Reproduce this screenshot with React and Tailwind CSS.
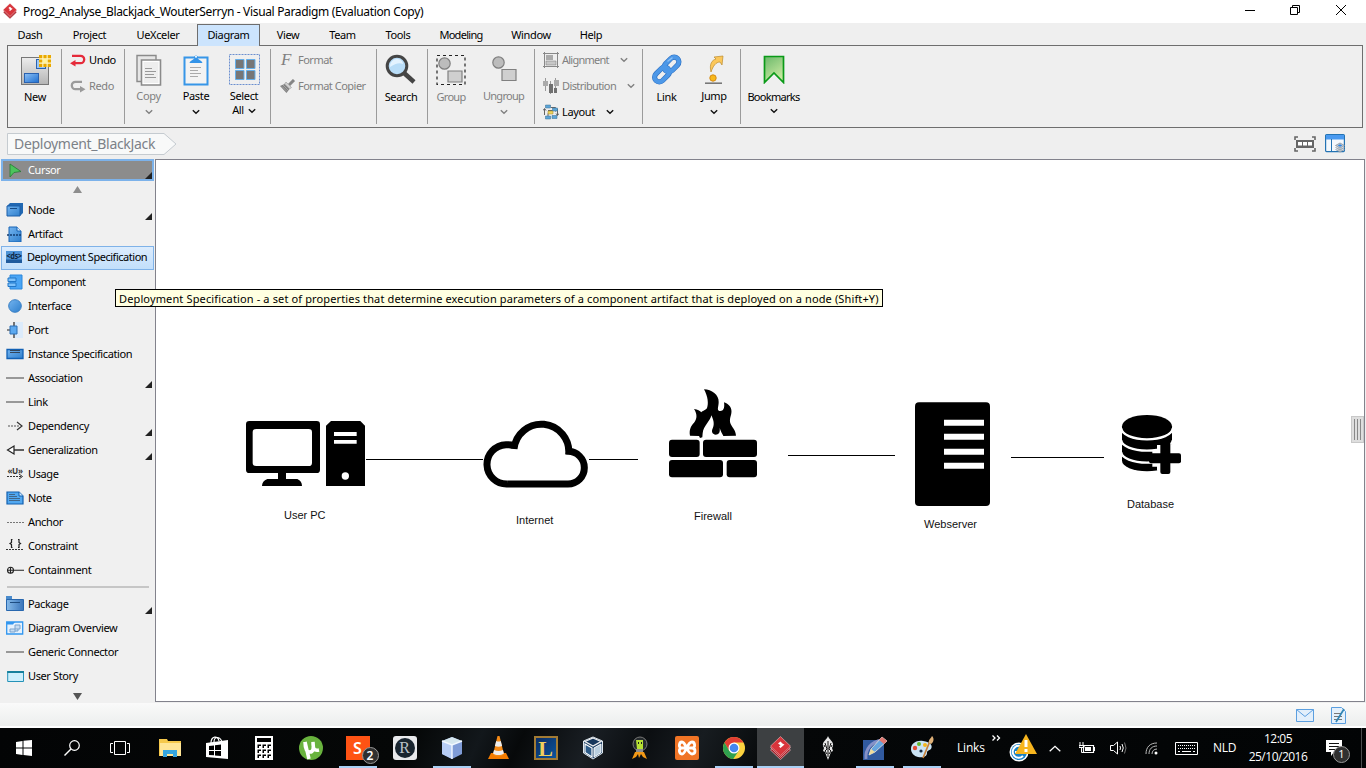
import React from "react";

const Svg = ({ w = 24, h = w, vb, className = "", children }) => (
  <svg width={w} height={h} viewBox={vb || `0 0 ${w} ${h}`} fill="none" className={`block shrink-0 ${className}`}>
    {children}
  </svg>
);

const Logo = ({ size = 14 }) => (
  <Svg w={size} h={size * 1.15} vb="0 0 42 48">
    <path d="M21 9 41 28 21 47 1 28Z" fill="#a31c25" stroke="#f0d4d5" strokeWidth="1.2" />
    <path d="M21 4 41 23 21 43 1 23Z" fill="#c32630" stroke="#f0d4d5" strokeWidth="1.2" />
    <path d="M21 1 41 20 21 39 1 20Z" fill="#d8353c" stroke="#f0d4d5" strokeWidth="1" />
    <path d="m21 11 4.500 4.500 3.500 1.500-8 7-3-3 3-2.500-5-3.500Z" fill="#fff" />
  </Svg>
);

const Chevron = ({ dim }) => (
  <Svg w={8} h={6}>
    <path d="m.8 1.300 3.200 3 3.200-3" stroke={dim ? "#808080" : "#111"} strokeWidth="1.4" />
  </Svg>
);

/* ---------- ribbon icons ---------- */

const NewIcon = () => (
  <Svg w={32} h={32}>
    <defs>
      <linearGradient id="nw" x1="0" y1="0" x2="0" y2="1"><stop stopColor="#ededed" /><stop offset="1" stopColor="#b4b4b4" /></linearGradient>
      <linearGradient id="nb" x1="0" y1="0" x2="1" y2="1"><stop stopColor="#8cc0f5" /><stop offset="1" stopColor="#1e6fd0" /></linearGradient>
    </defs>
    <rect x="2.5" y="3.5" width="27" height="27" fill="url(#nw)" stroke="#777" />
    <rect x="5.500" y="19.500" width="14" height="9" fill="url(#nb)" stroke="#2a62b0" />
    <rect x="17.500" y="5.500" width="9" height="9" fill="#9cc6f3" stroke="#2a62b0" />
    <rect x="20" y="1" width="12" height="12" fill="#fdf6c8" />
    <path d="M20 1h3.300v3.300H20zM24.400 1h3.200v3.300h-3.200zM28.700 1H32v3.300h-3.300zM20 5.400h3.300v3.200H20zM28.700 5.400H32v3.200h-3.300zM20 9.700h3.300V13H20zM24.400 9.700h3.200V13h-3.200zM28.700 9.700H32V13h-3.300z" fill="#eaa900" />
    <path d="M24 5h4v4h-4z" fill="#fff3a0" />
  </Svg>
);
const UndoIcon = () => (
  <Svg w={16} h={13}>
    <path d="M2 1.800h8.500a3.700 3.700 0 0 1 0 7.400H4" stroke="#e52a3a" strokeWidth="2.300" />
    <path d="M0 9.200 5.500 6v6.400Z" fill="#e52a3a" />
  </Svg>
);
const RedoIcon = () => (
  <Svg w={16} h={13}>
    <path d="M12 1.800H5.500a3.700 3.700 0 0 0 0 7.400H11" stroke="#9a9a9a" strokeWidth="2.300" />
    <path d="M15.500 9.200 10 6v6.400Z" fill="#9a9a9a" />
  </Svg>
);
const CopyIcon = () => (
  <Svg w={28} h={32}>
    <path d="M2 1.500h19v26H2z" fill="#e6e6e6" stroke="#8a8a8a" strokeWidth="1.400" />
    <path d="M6.500 6h19v25h-19z" fill="#fff" stroke="#8a8a8a" strokeWidth="1.600" />
    <path d="M8.500 8h15v21h-15z" fill="#eee" />
    <path d="M10 14.500h7M10 17.500h11M10 20.500h9M10 23.500h11" stroke="#999" />
  </Svg>
);
const PasteIcon = () => (
  <Svg w={26} h={32}>
    <path d="M1.500 3.500h23v27h-23z" fill="#f3f3f3" stroke="#3796e8" strokeWidth="2" />
    <path d="M6.500 9c1-3 4-3 5-5a1.700 1.700 0 1 1 3 0c1 2 4 2 5 5Z" fill="#3393e8" />
    <circle cx="13" cy="2.800" r="1" fill="#fff" />
    <path d="M7 13.500h11M7 16.500h8M7 19.500h11M7 22.500h8" stroke="#aaa" />
  </Svg>
);
const SelectIcon = () => (
  <Svg w={31} h={31}>
    <path d="M.5.5h30v30H.5z" stroke="#6b8fcf" strokeDasharray="2 1" />
    <path d="M6.500 5.500h8.500v9H6.500zM17.500 5.500H26v9h-8.500zM6.500 16.500h8.500v9H6.500zM17.500 16.500H26v9h-8.500z" fill="#767676" stroke="#65aee8" strokeWidth="1" />
  </Svg>
);
const BrushIcon = () => (
  <Svg w={17} h={15}>
    <path d="m15 1-5 5" stroke="#858585" strokeWidth="3" />
    <path d="m7 3 5.500 5.500-2 1.500L5.500 5Z" fill="#d0d0d0" stroke="#999" strokeWidth=".6" />
    <path d="m5.500 5 5 5-3 4L1 7Z" fill="#808080" />
    <path d="m3 7.500 5 5M4 6l5 5" stroke="#b5b5b5" strokeWidth=".7" />
  </Svg>
);
const SearchIcon = () => (
  <Svg w={32} h={32}>
    <path d="m18.500 18.500 10.500 9.500" stroke="#454545" strokeWidth="4.500" />
    <circle cx="12" cy="12" r="9.800" fill="#b9ddf8" stroke="#454545" strokeWidth="3" />
    <path d="M5 13a7 7 0 0 1 7-8c4 0 6 3 6 5-4-2-8 0-13 3Z" fill="#e4f3ff" />
  </Svg>
);
const GroupIcon = ({ framed }) => (
  <Svg w={32} h={32}>
    {framed && <path d="M2 1.500h28v29H2z" stroke="#222" strokeWidth="1.200" strokeDasharray="3 3" />}
    <circle cx={framed ? 9.500 : 10.500} cy={framed ? 9.500 : 8.500} r="5.700" fill="#bcbcbc" stroke="#808080" strokeWidth="1.200" />
    <path d={framed ? "M13 17h14v11H13z" : "M14 15.500h14v11H14z"} fill="#cfcfcf" stroke="#808080" strokeWidth="1.200" />
  </Svg>
);
const AlignIcon = () => (
  <Svg w={16} h={16}>
    <path d="M1.500 0v16M14.500 0v16M0 1.500h16M0 14.500h16" stroke="#888" />
    <path d="M3 3h7v5H3z" fill="#aaa" /><path d="M3 9h10v4H3z" fill="#c7c7c7" stroke="#888" strokeWidth=".6" />
  </Svg>
);
const DistIcon = () => (
  <Svg w={16} h={16}>
    <path d="M2.500 0v13M7.500 3v13M12.500 0v15" stroke="#999" />
    <path d="M0 3h5v5H0zM11 2h5v6h-5z" fill="#aaa" /><path d="M6 6h4v9H6zM11 10h3v5h-3z" fill="#707070" />
  </Svg>
);
const LayoutIcon = () => (
  <Svg w={16} h={16}>
    <path d="M1.500 11V5M0 6.500 1.500 4.500 3 6.500M8 3.500h4.500v4M5 6.500H9.500M5 9.500v3M14.500 5v6M13 9.500l1.500 2 1.500-2" stroke="#555" strokeWidth=".9" />
    <path d="M2.500 1h5v3h-5zM9.500 4h5v3h-5zM2.500 12h5v3h-5zM9 11.500h5v3H9z" fill="#5da5d8" stroke="#356c91" strokeWidth=".5" />
    <path d="M5 7h5v3H5z" fill="#f0d560" stroke="#9a8325" strokeWidth=".5" />
  </Svg>
);
const LinkIcon = () => (
  <Svg w={32} h={32}>
    {[["#2d6fc0", 5.2], ["#4d98e8", 4]].map(([c, s]) => (
      <g key={c} stroke={c} strokeWidth={s}>
        <rect x="-8.500" y="-4.700" width="17" height="9.400" rx="4.700" transform="translate(20.500 10.500) rotate(-45)" />
        <rect x="-8.500" y="-4.700" width="17" height="9.400" rx="4.700" transform="translate(11 20.500) rotate(-45)" />
      </g>
    ))}
    <path d="m17 7 4-3" stroke="#8cc0f5" strokeWidth="1.500" strokeLinecap="round" />
  </Svg>
);
const JumpIcon = () => (
  <Svg w={20} h={30}>
    <path d="M7 17C5 9 8 5 12 4L10 2l9-1-1 9-2-3c-4 0-7 4-9 10Z" fill="#fbc75a" stroke="#bc8b2c" strokeWidth=".7" />
    <circle cx="9" cy="23" r="3.200" fill="#f8b819" stroke="#d58b16" />
    <path d="M1 28.200h17" stroke="#707070" strokeWidth="1.500" />
  </Svg>
);
const BookmarkIcon = () => (
  <Svg w={22} h={29}>
    <defs><linearGradient id="bk" x1="0" y1="0" x2=".5" y2="1"><stop stopColor="#6bb86b" /><stop offset="1" stopColor="#c8e9a0" /></linearGradient></defs>
    <path d="M1.500 1.500h19v26l-9.500-9.500-9.500 9.500Z" fill="url(#bk)" stroke="#0a9a18" strokeWidth="1.700" />
  </Svg>
);

/* ---------- ribbon ---------- */

const Group = ({ className, children }) => (
  <div className={`my-[3px] flex shrink-0 border-r border-[#9b9b9b] ${className}`}>{children}</div>
);

const Big = ({ icon, label, width, dim, arrow, up, inlineArrow, tight }) => (
  <div className={`flex shrink-0 flex-col items-center ${width} ${dim ? "text-[#808080]" : "text-black"}`}>
    <div className="flex h-[41px] items-center justify-center">{icon}</div>
    <div className={`text-[11px] leading-[14px] whitespace-nowrap ${tight ? "tracking-[-0.7px]" : "tracking-[-0.35px]"} ${up ? "-mt-px" : ""}`}>{label}</div>
    {arrow && <div className={up ? "mt-[6px]" : "mt-[4px]"}><Chevron dim={dim} /></div>}
    {inlineArrow && (
      <div className="flex items-center gap-1 text-[11px] leading-[14px] tracking-[-0.35px]">{inlineArrow}<span className="pt-[2px]"><Chevron /></span></div>
    )}
  </div>
);

const Small = ({ icon, label, dim, arrow, gap = "gap-1", tracking = "tracking-[-0.35px]" }) => (
  <div className={`flex h-[26px] items-center text-[11px] whitespace-nowrap ${gap} ${dim ? "text-[#808080]" : "text-black"}`}>
    {icon}
    <span className={tracking}>{label}</span>
    {arrow && <span className="ml-[8px]"><Chevron dim={dim} /></span>}
  </div>
);

const menus = [
  ["Dash", "w-[60px]"], ["Project", "w-[59px]"], ["UeXceler", "w-[78px]"], ["Diagram", "w-[63px]"], ["View", "w-14"],
  ["Team", "w-[53px]"], ["Tools", "w-[58px]"], ["Modeling", "w-[68px]"], ["Window", "w-[72px]"], ["Help", "w-12"],
];

const Header = () => (
  <header className="shrink-0">
    <div className="flex h-[23px] items-center bg-white pl-[3px]">
      <Logo size={14} />
      <span className="ml-[6px] text-[12px] tracking-[-0.34px] whitespace-nowrap">Prog2_Analyse_Blackjack_WouterSerryn - Visual Paradigm (Evaluation Copy)</span>
      <div className="mr-[19px] -mt-[4px] ml-auto flex items-center gap-[35px]">
        <Svg w={11} h={10}><path d="M1 5.500h10" stroke="#000" /></Svg>
        <Svg w={11} h={10}><path d="M.5 2.500h7v7h-7zM2.500 2V.5h7v7H8" stroke="#000" /></Svg>
        <Svg w={11} h={10}><path d="m0 0 10 10M10 0 0 10" stroke="#000" /></Svg>
      </div>
    </div>
    <nav className="flex h-[23px] items-end bg-[#efefef] text-[11px]">
      {menus.map(([m, w]) => (
        <div key={m} className={`flex h-[22px] items-center justify-center ${m === "Modeling" ? "tracking-[-0.7px]" : "tracking-[-0.35px]"} ${w} ${m === "Diagram" ? "z-10 border border-b-0 border-[#6e6e6e] bg-[#cce4fd]" : ""}`}>{m}</div>
      ))}
    </nav>
    <div className="-mt-px mr-[3px] ml-[7px] flex h-[83px] border border-[#6e6e6e] bg-[#efefef]">
      <Group className="w-[54px]"><Big icon={<NewIcon />} label="New" width="w-[54px]" /></Group>
      <Group className="w-[63px] flex-col pl-2">
        <div className="-mt-[2px]">
          <Small icon={<UndoIcon />} label="Undo" gap="gap-[3px]" />
          <Small icon={<RedoIcon />} label="Redo" dim gap="gap-[3px]" />
        </div>
      </Group>
      <Group className="w-[146px]">
        <Big icon={<CopyIcon />} label="Copy" width="w-[47px]" dim arrow up />
        <Big icon={<PasteIcon />} label="Paste" width="w-[48px]" arrow up />
        <Big icon={<SelectIcon />} label="Select" width="w-[48px]" up inlineArrow="All" />
      </Group>
      <Group className="w-[106px] flex-col pl-[8px]">
        <div className="-mt-[2px]">
          <Small icon={<span className="w-[17px] pl-[2px] font-['Liberation_Serif',serif] text-[17px] italic">F</span>} label="Format" dim gap="gap-[2px]" tracking="tracking-[-0.5px]" />
          <Small icon={<BrushIcon />} label="Format Copier" dim gap="gap-[2px]" tracking="tracking-[-0.5px]" />
        </div>
      </Group>
      <Group className="w-[51px]"><Big icon={<SearchIcon />} label="Search" width="w-[48px]" /></Group>
      <Group className="w-[107px]">
        <Big icon={<GroupIcon framed />} label="Group" width="w-[46px]" dim tight />
        <Big icon={<GroupIcon />} label="Ungroup" width="w-[59px]" dim arrow up tight />
      </Group>
      <Group className="w-[108px] flex-col pl-2">
        <div className="-mt-[2px]">
          <Small icon={<AlignIcon />} label="Alignment" dim arrow gap="gap-[3px]" tracking="tracking-[-0.75px]" />
          <Small icon={<DistIcon />} label="Distribution" dim arrow gap="gap-[3px]" tracking="tracking-[-0.6px]" />
          <Small icon={<LayoutIcon />} label="Layout" arrow gap="gap-[3px]" />
        </div>
      </Group>
      <Group className="w-[98px]">
        <Big icon={<LinkIcon />} label="Link" width="w-[47px]" />
        <Big icon={<JumpIcon />} label="Jump" width="w-[48px]" arrow up />
      </Group>
      <div className="my-[3px]"><Big icon={<BookmarkIcon />} label="Bookmarks" width="w-[65px]" arrow tight /></div>
    </div>
    <div className="flex h-[31px] items-center bg-[#efefef] pr-[21px] pl-[7px]">
      <div className="relative flex h-[22px] w-[170px] items-center pl-[7px]">
        <Svg w={170} h={22} className="absolute top-0 left-0"><path d="M.5.5H157l12 10.500-12 10.500H.5Z" fill="#f8f9f9" stroke="#c5cbd0" /></Svg>
        <span className="relative text-[14px] tracking-[-0.3px] text-[#7c8188]">Deployment_BlackJack</span>
      </div>
      <div className="ml-auto flex items-center gap-[9px]">
        <Svg w={22} h={16}>
          <path d="M1 4V1h3M18 1h3v3M21 12v3h-3M4 15H1v-3" stroke="#666" strokeWidth="1.600" />
          <path d="M2 4h18v8H2z" fill="#666" /><path d="M4 6h4v3.500H4zM9 6h4v3.500H9zM14 6h4v3.500h-4z" fill="#fff" />
        </Svg>
        <Svg w={20} h={19}>
          <rect x=".6" y=".6" width="18.800" height="17" rx="1" fill="#f4f8fc" stroke="#2373b3" strokeWidth="1.200" />
          <path d="M1 1h18v4.500H1z" fill="#4a9af0" /><path d="M6.500 5v12" stroke="#2373b3" />
          <path d="m15 9 4.500 2.500-4.500 2.500-4.500-2.500Zm-4.500 4.500L15 16l4.500-2.500m-9 2L15 18l4.500-2.500" fill="#c2ccd6" stroke="#8a949e" strokeWidth=".8" />
          <path d="m15 10.200 2.300 1.300-2.300 1.300-2.300-1.300Z" fill="#2d86e6" />
        </Svg>
      </div>
    </div>
  </header>
);

/* ---------- palette ---------- */

const line = <path d="M0 8h18" stroke="#888" strokeWidth="1.700" />;
const icons = {
  cursor: <path d="M4 2v13l4-4.500 7-1Z" fill="#4cc45c" stroke="#267a34" strokeWidth=".8" />,
  node: <><path d="m1 4 3-3h13v10l-3 3H1Z" fill="#2268b2" /><path d="M1 4h13v10H1z" fill="url(#pal)" stroke="#1d5fa8" /><path d="M4 6.500h7" stroke="#174b86" /></>,
  artifact: <><path d="M3 1h8l4 4v11H3z" fill="url(#pal)" stroke="#1965b5" /><path d="M11 1v4h4" fill="#d8ecff" stroke="#1965b5" /><path d="M1 9h15" stroke="#123c70" strokeWidth="1.500" strokeDasharray="2 1" /></>,
  ds: <><path d="M1 2h16v12H1z" fill="#4c93d8" /><path d="M1 10.500h16V14H1z" fill="#205b9d" /><text x="9" y="9.500" textAnchor="middle" fontFamily="Noto Sans, sans-serif" fontSize="8" fontWeight="700" fill="#0d2744" textLength="15" lengthAdjust="spacingAndGlyphs">{"<ds>"}</text></>,
  component: <><path d="M4 1h12v14H4z" fill="#4aa5f5" stroke="#2b87dc" /><path d="M2 4h8v3.500H2zM2 9h8v3.500H2z" fill="#7cc1fb" stroke="#2176c7" /></>,
  iface: <circle cx="9" cy="8" r="6.300" fill="url(#pal)" stroke="#3b80c4" />,
  port: <><path d="M9 0h8v16H9z" fill="#dcebfb" /><path d="M8 0v16M1 8h3" stroke="#222" strokeWidth="1.200" /><path d="M4 4h7v8H4z" fill="#5ca9f0" stroke="#2c6fb4" /></>,
  instance: <><path d="M1 3.500h16v9H1z" fill="url(#pal)" stroke="#1160b4" strokeWidth="1.300" /><path d="M4 4.500h10M4 6.500h10" stroke="#34475c" /></>,
  line,
  dep: <><path d="M2 8h12" stroke="#555" strokeDasharray="2 1" /><path d="m11 4 5 4-5 4" stroke="#333" strokeWidth="1.200" /></>,
  gen: <><path d="M8 8h10" stroke="#111" strokeWidth="1.300" /><path d="M1.500 8 8 4v8Z" fill="#fff" stroke="#222" strokeWidth="1.200" /></>,
  usage: <><text x="9" y="7.500" textAnchor="middle" fontFamily="Noto Sans, sans-serif" fontSize="8" fontWeight="700" fill="#333" textLength="15" lengthAdjust="spacingAndGlyphs">«U»</text><path d="M1 10.500h15" stroke="#333" strokeDasharray="2 1" /><path d="m13 8 3.500 2.500L13 13" stroke="#333" /></>,
  note: <><path d="M1 2h12l4 4v8H1z" fill="#52a8f0" stroke="#115fae" strokeWidth="1.200" /><path d="M13 2v4h4" fill="#d4eaff" stroke="#115fae" /><path d="M3 4.500h6M3 6.500h8M3 8.500h11M3 10.500h11" stroke="#3e5770" strokeWidth=".8" /></>,
  anchor: <path d="M1 8.500h17" stroke="#777" strokeDasharray="2 1" />,
  constraint: <><path d="M0 11.500h18" stroke="#333" strokeDasharray="2 1" /><path d="M6.500 1.500H5.500v3L4 5.500l1.500 1v3h1M12 1.500h1v3l1.500 1-1.500 1v3h-1" stroke="#222" strokeWidth="1.200" /></>,
  contain: <><circle cx="4.500" cy="8.300" r="3" stroke="#222" strokeWidth="1.100" /><path d="M1.500 8.300H18M4.500 5.300v6" stroke="#222" strokeWidth="1.100" /></>,
  pkg: <><path d="M0 0h6v4H0z" fill="#4a8bcc" /><path d="M.5 3.500h17v11H.5z" fill="url(#pal2)" stroke="#2867ae" /><path d="M4 6.500h10" stroke="#1f4d82" /></>,
  overview: <><path d="M.7 2h16v12H.7z" fill="#e5f1fd" stroke="#3196ef" strokeWidth="1.300" /><path d="M1 2h8L7 4.500H1z" fill="#3196ef" /><path d="M9 5h5v4H9zM4 9h5v3H4zM9 11h3V9" fill="#c6dcf2" stroke="#7aa3cc" /></>,
  story: <><path d="M1.700 3.500h15.800v10H1.700z" fill="#cceffc" stroke="#2492b8" /><path d="M1.200 3h16.800v2H1.200z" fill="#15809c" /></>,
};
const tools = [
  ["node", "Node", 1], ["artifact", "Artifact"], ["ds", "Deployment Specification"], ["component", "Component"], ["iface", "Interface"],
  ["port", "Port"], ["instance", "Instance Specification"], ["line", "Association", 1], ["line", "Link"], ["dep", "Dependency", 1],
  ["gen", "Generalization", 1], ["usage", "Usage"], ["note", "Note"], ["anchor", "Anchor"], ["constraint", "Constraint"], ["contain", "Containment"],
];
const extra = [["pkg", "Package", 1], ["overview", "Diagram Overview"], ["line", "Generic Connector"], ["story", "User Story"]];

const Corner = ({ className }) => <Svg w={7} h={7} className={className}><path d="M7 0v7H0Z" fill="#222" /></Svg>;

const Tool = ({ icon, label, corner }) => {
  const hot = icon === "ds";
  return (
    <div className={`flex h-6 items-center text-[11px] whitespace-nowrap ${hot ? "mr-px ml-px border border-[#7fb2e8] bg-linear-to-b from-[#dcecfd] to-[#c2dffb] pb-[2px] pl-[3px] tracking-[-0.47px]" : "pl-[6px] tracking-[-0.38px]"}`}>
      <Svg w={18} h={16}>{icons[icon]}</Svg>
      <span className="ml-[4px]">{label}</span>
      {corner && <Corner className="mr-[3px] mb-[2px] ml-auto self-end" />}
    </div>
  );
};

const Palette = () => (
  <aside className="flex w-[155px] shrink-0 flex-col bg-[#f0f0f0]">
    <svg width="0" height="0" className="absolute">
      <defs>
        <linearGradient id="pal" x1="0" y1="0" x2="1" y2="1"><stop stopColor="#73b4f0" /><stop offset="1" stopColor="#2f7fcc" /></linearGradient>
        <linearGradient id="pal2"><stop stopColor="#87bbea" /><stop offset="1" stopColor="#3a74ba" /></linearGradient>
      </defs>
    </svg>
    <div className="mr-px ml-px flex h-[22px] items-center border-2 border-[#7cb2ea] bg-[#8c8c8c] pl-[3px] text-[11px] tracking-[-0.38px] text-white">
      <Svg w={18} h={16}>{icons.cursor}</Svg>
      <span className="ml-[4px]">Cursor</span>
      <Corner className="ml-auto self-end" />
    </div>
    <div className="flex h-[17px] items-center justify-center"><Svg w={9} h={7}><path d="M4.500 0 9 7H0Z" fill="#8d8d8d" /></Svg></div>
    {tools.map(([i, l, c]) => <Tool key={l} icon={i} label={l} corner={c} />)}
    <div className="h-[10px] pt-1 pr-[6px] pl-[7px]"><div className="h-[2px] bg-[#c6c6c6]" /></div>
    {extra.map(([i, l, c]) => <Tool key={l} icon={i} label={l} corner={c} />)}
    <div className="flex h-[15px] items-center justify-center pt-px"><Svg w={9} h={7}><path d="M4.500 7 9 0H0Z" fill="#555" /></Svg></div>
  </aside>
);

/* ---------- canvas ---------- */

const Wire = ({ className }) => <div className={`absolute h-px bg-black ${className}`} />;
const Label = ({ className, children }) => (
  <div className={`absolute font-['Liberation_Sans',sans-serif] text-[11px] leading-[13px] whitespace-nowrap text-[#111] ${className}`}>{children}</div>
);

const Canvas = () => (
  <main className="relative mr-px h-[543px] flex-1 border border-[#82828c] bg-white">
    <Wire className="top-[299px] left-[210px] w-[117px]" />
    <Wire className="top-[299px] left-[433px] w-[49px]" />
    <Wire className="top-[295px] left-[632px] w-[107px]" />
    <Wire className="top-[297px] left-[855px] w-[93px]" />

    <Svg w={122} h={68} vb="45 120 366 204" className="absolute top-[260px] left-[89px]">
      <path fill="#000" fillRule="evenodd" d="M58 123H260Q270 123 270 133V269Q270 279 260 279H168V297H202Q216 303 216 318H96Q96 303 112 297H144V279H58Q48 279 48 269V133Q48 123 58 123ZM78 147Q68 147 68 157V249Q68 258 78 258H236Q246 258 246 248V157Q246 147 236 147Z" />
      <path fill="#000" d="M303 123H391L405 137V318H288V137Z" />
      <path fill="#fff" d="M312 156h68v12h-68zM312 180h68v11h-68z" /><circle cx="346" cy="288" r="11" fill="#fff" />
    </Svg>
    <Svg w={110} h={72} vb="750 114 330 216" className="absolute top-[258px] left-[324px]">
      <path d="M832 312H1014A49 49 0 0 0 1014 214H1006M1016 223A82 82 0 1 0 852 207M855 196Q845 194 828 194A59 59 0 0 0 832 312" stroke="#000" strokeWidth="21" />
    </Svg>
    <Svg w={90} h={90} vb="84 24 270 270" className="absolute top-[228px] left-[512px]">
      <g fill="#000">
        <path d="M192 28C215 28 237 45 236 66C236 80 230 90 238 93C249 95 255 86 252 67C268 72 277 85 274 100C272 112 267 120 272 132C280 147 287 152 288 167L250 168C247 162 242 154 239 144C241 158 236 164 227 164C218 164 214 156 217 148C223 136 223 124 214 106C212 122 190 138 188 160L187 172L180 174L177 168L150 167C147 150 152 138 162 128C172 116 172 102 162 87C173 88 180 92 184 97C187 92 196 92 201 84C206 72 204 50 192 28Z" />
        <rect x="87" y="179" width="92" height="52" rx="9" /><rect x="189" y="179" width="162" height="52" rx="9" />
        <rect x="87" y="240" width="162" height="52" rx="9" /><rect x="260" y="240" width="91" height="52" rx="9" />
      </g>
    </Svg>
    <Svg w={75} h={104} vb="825 67 225 312" className="absolute top-[242px] left-[759px]">
      <rect x="825" y="68" width="225" height="311" rx="12" fill="#000" />
      <path fill="#fff" d="M912 120h120v18H912zM912 162h120v18H912zM912 207h120v18H912zM912 249h120v18H912z" />
    </Svg>
    <Svg w={62} h={63} vb="360 69 186 189" className="absolute top-[253px] left-[964px]">
      <path d="M366 109A75 34 0 0 1 516 109V212A75 32 0 0 1 366 212Z" fill="#000" />
      <path d="M364 115A77 33 0 0 0 518 115M364 151A77 31 0 0 0 518 151M364 187A77 31 0 0 0 518 187" stroke="#fff" strokeWidth="7" />
      <path d="M496 165v77M457 205h76" stroke="#fff" strokeWidth="50" strokeLinejoin="round" />
      <rect x="481" y="155" width="30" height="97" rx="6" fill="#000" /><rect x="447" y="190" width="96" height="30" rx="6" fill="#000" />
    </Svg>

    <Label className="top-[349px] left-[128px]">User PC</Label>
    <Label className="top-[354px] left-[360px]">Internet</Label>
    <Label className="top-[350px] left-[538px]">Firewall</Label>
    <Label className="top-[358px] left-[768px]">Webserver</Label>
    <Label className="top-[338px] left-[971px]">Database</Label>

    <div className="absolute top-[256px] right-0 flex h-[27px] w-[13px] items-center justify-center gap-[2px] border border-[#c8c8c8] bg-[#dedede]">
      <i className="h-[21px] w-px bg-[#888]" /><i className="h-[21px] w-px bg-[#888]" /><i className="h-[21px] w-px bg-[#888]" />
    </div>
    <div className="absolute top-[129px] -left-[41px] z-20 flex h-[18px] w-[768px] items-center border border-black bg-[#ffffe1] pt-[2px] pl-[3px] text-[11px] tracking-[0.134px] whitespace-nowrap text-black">
      Deployment Specification - a set of properties that determine execution parameters of a component artifact that is deployed on a node (Shift+Y)
    </div>
  </main>
);

/* ---------- taskbar ---------- */

const apps = [
  ["explorer", <Svg w={22} h={18}><path d="M0 0h8l1 2h13v15H0z" fill="#f5c84c" /><path d="M1 4h21v13H1z" fill="#ffe596" /><path d="M4 18v-7h14v7h-4v-3H8v3Z" fill="#35a5e0" /></Svg>],
  ["store", <Svg w={22} h={24}><path d="M5 7C5 0 12-1 13 5M8 6c0-6 6-6 8 0" stroke="#fff" strokeWidth="1.200" /><path d="m0 7 22-3v19L0 21Z" fill="#fff" /><path d="m3 10 5-.6V14H3zM9 9.300l6-.8V14H9zM3 15h5v4.300L3 19zM9 15h6v5l-6-.5z" fill="#000" /></Svg>],
  ["calculator", <Svg w={18} h={24}><path d="M0 0h18v24H0z" fill="#fff" /><path d="M2 2h14v4H2z" fill="#000" /><path d="M2.500 8.500H6V10H4v2H2.500zM7.500 8.500H11V10H9v2H7.500zM12.500 8.500H16V10h-2v2h-1.500zM2.500 13.500H6V15H4v2H2.500zM7.500 13.500H11V15H9v2H7.500zM12.500 13.500H16V15h-2v2h-1.500zM2.500 18.500H6V20H4v2H2.500zM7.500 18.500H11V20H9v2H7.500zM12.500 18.500H16V20h-2v2h-1.500z" fill="#000" /></Svg>],
  ["torrent", <Svg w={24} h={24}><circle cx="12" cy="12" r="12" fill="#69b33e" /><path d="M6 6c0 8 2 10 5 10s4-3 3-10c0 7 1 9 6 8M6 6l4 17" stroke="#fff" strokeWidth="3.500" /></Svg>],
  ["s", <div className="relative flex h-6 w-6 items-center justify-center bg-[#ff5314] text-[16px] font-semibold text-white">S<span className="absolute top-[11px] left-[16px] flex size-[17px] items-center justify-center rounded-full border border-[#999] bg-[#303030] text-[12px]">2</span></div>, 1],
  ["r", <div className="flex size-6 items-center justify-center rounded-[3px] bg-[#e9eaec]"><div className="flex size-[20px] items-center justify-center rounded-full bg-[#19252f] font-['Liberation_Serif',serif] text-[16px] text-[#b9c2c9]">R</div></div>],
  ["cube", <Svg w={24} h={24}><path d="m12 1 10 4v13l-10 5L2 18V5Z" fill="#7f9bd6" /><path d="m12 1 10 4-10 4L2 5Z" fill="#d5e6ee" /><path d="m2 5 10 4v14L2 18Z" fill="#b7cdf5" /><path d="M12 9v14M2 5l10 4 10-4" stroke="#f1f7ff" strokeWidth="1.400" /></Svg>, 1],
  ["vlc", <Svg w={22} h={24}><path d="m3 17-3 6h21l-3-6Z" fill="#f47c00" /><path d="M9.500 0h2l4.500 18.500c-3 2.500-8.500 2.500-11 0Z" fill="#f58a16" /><path d="m8.200 5-1.300 5c2.500 1 4.700 1 7.200 0l-1.300-5c-1.600.8-3.200.8-4.600 0ZM6 14l-.9 3.500c3 2 7.500 2 10.800 0L15 14c-3 1.200-6 1.200-9 0Z" fill="#eee" /></Svg>],
  ["lol", <div className="flex size-6 items-center justify-center border-2 border-[#a27b34] bg-linear-to-br from-[#0a2c63] to-[#0b559c] font-['Liberation_Serif',serif] text-[22px] font-bold text-[#f0cf5b]">L</div>],
  ["vbox", <Svg w={20} h={24}><path d="m10 1 9.500 4v12L10 23 .5 17V5Z" fill="#24466c" stroke="#dfe8ef" /><path d="m10 2 8 3.500-8 4.500-8-4.500Z" fill="#17375c" stroke="#eee" strokeWidth="1.300" /><path d="m2 8 7 4v9l-7-4.500Z" fill="#2c5a87" stroke="#fff" strokeWidth="1.200" /><path d="m18 8-7 4v9l7-4.500Z" fill="#b9cede" stroke="#fff" strokeWidth=".9" /></Svg>],
  ["kerbal", <Svg w={16} h={24}><circle cx="8" cy="8" r="7" fill="#252a2c" stroke="#777" /><path d="M4 4h7v9H5z" fill="#b6e034" /><path d="M6 6h1v2H6zM9 6h1v2H9z" fill="#222" /><path d="M4 13h7v5H4z" fill="#8d8d8d" /><path d="M3 16 0 23l4-2 2-3 1 4 2-4 2 3 4 2-3-7Z" fill="#f29816" /></Svg>],
  ["xampp", <Svg w={24} h={24}><rect width="24" height="24" rx="2" fill="#f07425" /><path d="M12 12H7C3 12 4 6 7 6c4 0 5 12 10 12 4 0 4-6 0-6M12 12h5c4 0 3-6 0-6-5 0-6 12-10 12-3 0-4-6 0-6" stroke="#fff" strokeWidth="2.800" /></Svg>],
  ["chrome", <Svg w={22} h={22}><circle cx="11" cy="11" r="11" fill="#fcd23f" /><path d="M1.500 5.500A11 11 0 0 1 20.500 5.500H11L6.200 13.800Z" fill="#e23e33" /><path d="M1.500 5.500 6.200 13.800 11 16.500 10 22A11 11 0 0 1 1.500 5.500Z" fill="#2fa14f" /><path d="m15.800 13.700-5.600 8.200c-2-.2-4-3-4-8Z" fill="#2fa14f" /><circle cx="11" cy="11" r="5.500" fill="#fff" /><circle cx="11" cy="11" r="4.300" fill="#4587ee" /></Svg>, 1],
  ["vp", <Logo size={21} />, 2],
  ["skyrim", <Svg w={12} h={24}><path d="M6 0c-1 4-6 5-5 10l1 2-1 3 2 1 3 8 3-8 2-1-1-3 1-2c1-5-4-6-5-10Z" fill="#e7e7e7" /><path d="M6 5v16M3 7l2 6-2 2 2 3M9 7l-2 6 2 2-2 3M3 11l-1-2M9 11l1-2" stroke="#111" strokeWidth="1" /></Svg>],
  ["editor", <Svg w={24} h={24}><path d="M0 4h21v20H0z" fill="#315a9f" /><path d="M3 23C2 13 8 6 19 4" stroke="#8591c8" strokeWidth="3" /><path d="m6 19 2-6L19 1l5 4-12 11Z" fill="#67a6df" stroke="#f0e8dc" strokeWidth=".8" /><path d="m16 4 3-3 5 4-3 3Z" fill="#df7770" /><path d="m6 19 2-6 4 3Z" fill="#f1dc9a" /></Svg>, 1],
  ["paint", <Svg w={24} h={24}><path d="M1 13c0-6 6-9 12-8 8 1 10 5 8 8-2 2-4 1-4 4 0 4-5 5-9 4s-7-4-7-8Z" fill="#cbe4f5" /><circle cx="5" cy="12" r="2.200" fill="#e24e36" /><circle cx="9" cy="8" r="2" fill="#65b92e" /><circle cx="15" cy="9" r="2" fill="#f5b51c" /><circle cx="11" cy="15" r="1.600" fill="#162a42" /><path d="m13 22 7-17" stroke="#c7803a" strokeWidth="1.700" /><path d="M19 7c-1-4 2-4 3-7 3 3 1 7-1 8Z" fill="#dfb178" /></Svg>, 1],
];

const Taskbar = () => (
  <footer className="flex h-10 shrink-0 items-stretch overflow-hidden bg-[#030506] bg-linear-[115deg,#030405_0%,#050707_30%,#12171b_35%,#07090a_38%,#191e23_43%,#0b0e11_47%,#171c20_51%,#050708_57%,#020405_100%] text-white">
    <div className="flex w-12 items-center justify-center"><Svg w={16} h={16}><path d="m0 2 6.500-1v6.500H0zM7.500.8 16 0v7.500H7.500zM0 8.500h6.500V15L0 14zM7.500 8.500H16V16l-8.500-1z" fill="#fff" /></Svg></div>
    <div className="flex w-12 items-center justify-center"><Svg w={16} h={16}><circle cx="10.500" cy="5.500" r="4.800" stroke="#fff" strokeWidth="1.200" /><path d="m7 9-6.500 6.500" stroke="#fff" strokeWidth="1.400" /></Svg></div>
    <div className="flex w-[50px] items-center pl-[14px]"><Svg w={20} h={14}><path d="M4.500.5h11v13h-11zM3 2.500H.5v9H3M17 2.500h2.500v9H17" stroke="#fff" /></Svg></div>
    {apps.map(([id, icon, state]) => (
      <div key={id} className={`flex w-[47px] shrink-0 flex-col items-center ${state === 2 ? "bg-[#3d4042]" : ""}`}>
        <div className="flex h-[38px] items-center pt-[2px]">{icon}</div>
        {state && <div className={`h-[2px] bg-[#a9d0f5] ${state === 2 ? "w-[47px]" : "w-[38px]"}`} />}
      </div>
    ))}
    <div className="flex flex-1 items-center pl-[12px] font-['Open_Sans',sans-serif] text-[12px]">
      <span className="w-[35px] tracking-[-0.2px]">Links</span>
      <Svg w={9} h={6} className="-mt-[21px]"><path d="m.5.500 2.500 2.500L.5 5.500M5 .5 7.500 3 5 5.500" stroke="#fff" strokeWidth="1.300" /></Svg>
      <Svg w={28} h={28} className="ml-[8px]">
        <circle cx="10" cy="18" r="9.500" fill="#fff" /><circle cx="10" cy="18" r="8" fill="#1580c8" /><path d="M15 15a6 6 0 1 0-1 7" stroke="#fff" strokeWidth="2" /><path d="M6 18h8" stroke="#fff" strokeWidth="2" />
        <path d="m17 0 11 20H6Z" fill="#f7b51e" /><path d="M17 6v7M17 15v3" stroke="#fff" strokeWidth="3" />
      </Svg>
      <Svg w={12} h={7} className="ml-[12px]"><path d="m.7 6.300 5.300-5 5.300 5" stroke="#fff" strokeWidth="1.300" /></Svg>
      <Svg w={16} h={12} className="ml-[18px]"><path d="M4.500 3.500h10v7h-10z" stroke="#fff" strokeWidth="1.200" /><path d="M6 5h6v4H6zM15 5h1v4h-1z" fill="#fff" /><path d="M1 0v3M4 0v3M0 3.500h5v2H0zM2.500 5v5.500H5" stroke="#fff" /></Svg>
      <Svg w={17} h={14} className="ml-[15px]"><path d="M.5 4.500h3l4-3.500v12l-4-3.500h-3zM10 5q1 2 0 4M12 3q2.500 4 0 8" stroke="#fff" /><path d="M14.500 1.500q3 5.500 0 11" stroke="#777" /></Svg>
      <Svg w={13} h={13} className="ml-[18px]"><path d="M1 12C1 5 5 1 12 1M4 12c0-5 3-8 8-8M7 12c0-3 2-5 5-5" stroke="#bbb" /><circle cx="11" cy="11" r="1.500" fill="#fff" /></Svg>
      <Svg w={23} h={13} className="ml-[17px]"><path d="M.5.5h22v12H.5z" stroke="#fff" /><path d="M3 3.500h18M3 6.500h18" stroke="#fff" strokeDasharray="1 1" /><path d="M3 9.500h2M7 9.500h9M18 9.500h2" stroke="#fff" /></Svg>
      <span className="ml-[15px] w-[24px] tracking-[-0.3px]">NLD</span>
      <div className="ml-[9px] w-[64px] text-center text-[12px] leading-[18px] tracking-[-0.5px] whitespace-nowrap"><div>12:05</div><div>25/10/2016</div></div>
      <div className="relative ml-[16px]">
        <Svg w={16} h={16}><path d="M0 0h16v12H8l-3 4v-4H0Z" fill="#fff" /><path d="M3 3.500h10M3 6.500h10M3 9.500h6" stroke="#111" /></Svg>
        <span className="absolute top-[6px] left-[7px] flex size-[17px] items-center justify-center rounded-full border border-[#999] bg-[#303030] text-[11px]">1</span>
      </div>
      <div className="mr-[4px] ml-auto h-10 w-px bg-[#4a4d4e]" />
    </div>
  </footer>
);

export default function App() {
  return (
    <div className="flex h-[768px] w-[1366px] flex-col overflow-hidden bg-[#efefef] font-['Noto_Sans',sans-serif] text-black">
      <Header />
      <div className="flex h-[544px] shrink-0"><Palette /><Canvas /></div>
      <div className="flex h-[23px] shrink-0 items-center justify-end gap-[17px] bg-linear-to-b from-[#fafafa] to-[#eceeed] pt-px pr-[20px]">
        <Svg w={18} h={13}><path d="M.5.5h17v12H.5z" fill="#e3effb" stroke="#5b9fe0" /><path d="m.5.500 8.500 7 8.500-7" stroke="#5b9fe0" /></Svg>
        <Svg w={15} h={17}><path d="M.5.5h10l4 4v12H.5z" fill="#e4f0fb" stroke="#5b9fe0" /><path d="M3 6.500h8M3 9.500h8M3 12.500h8" stroke="#777" /><path d="m5 15 8-13" stroke="#3185b5" strokeWidth="1.700" /></Svg>
      </div>
      <div className="h-[2px] shrink-0 bg-white" />
      <Taskbar />
    </div>
  );
}
